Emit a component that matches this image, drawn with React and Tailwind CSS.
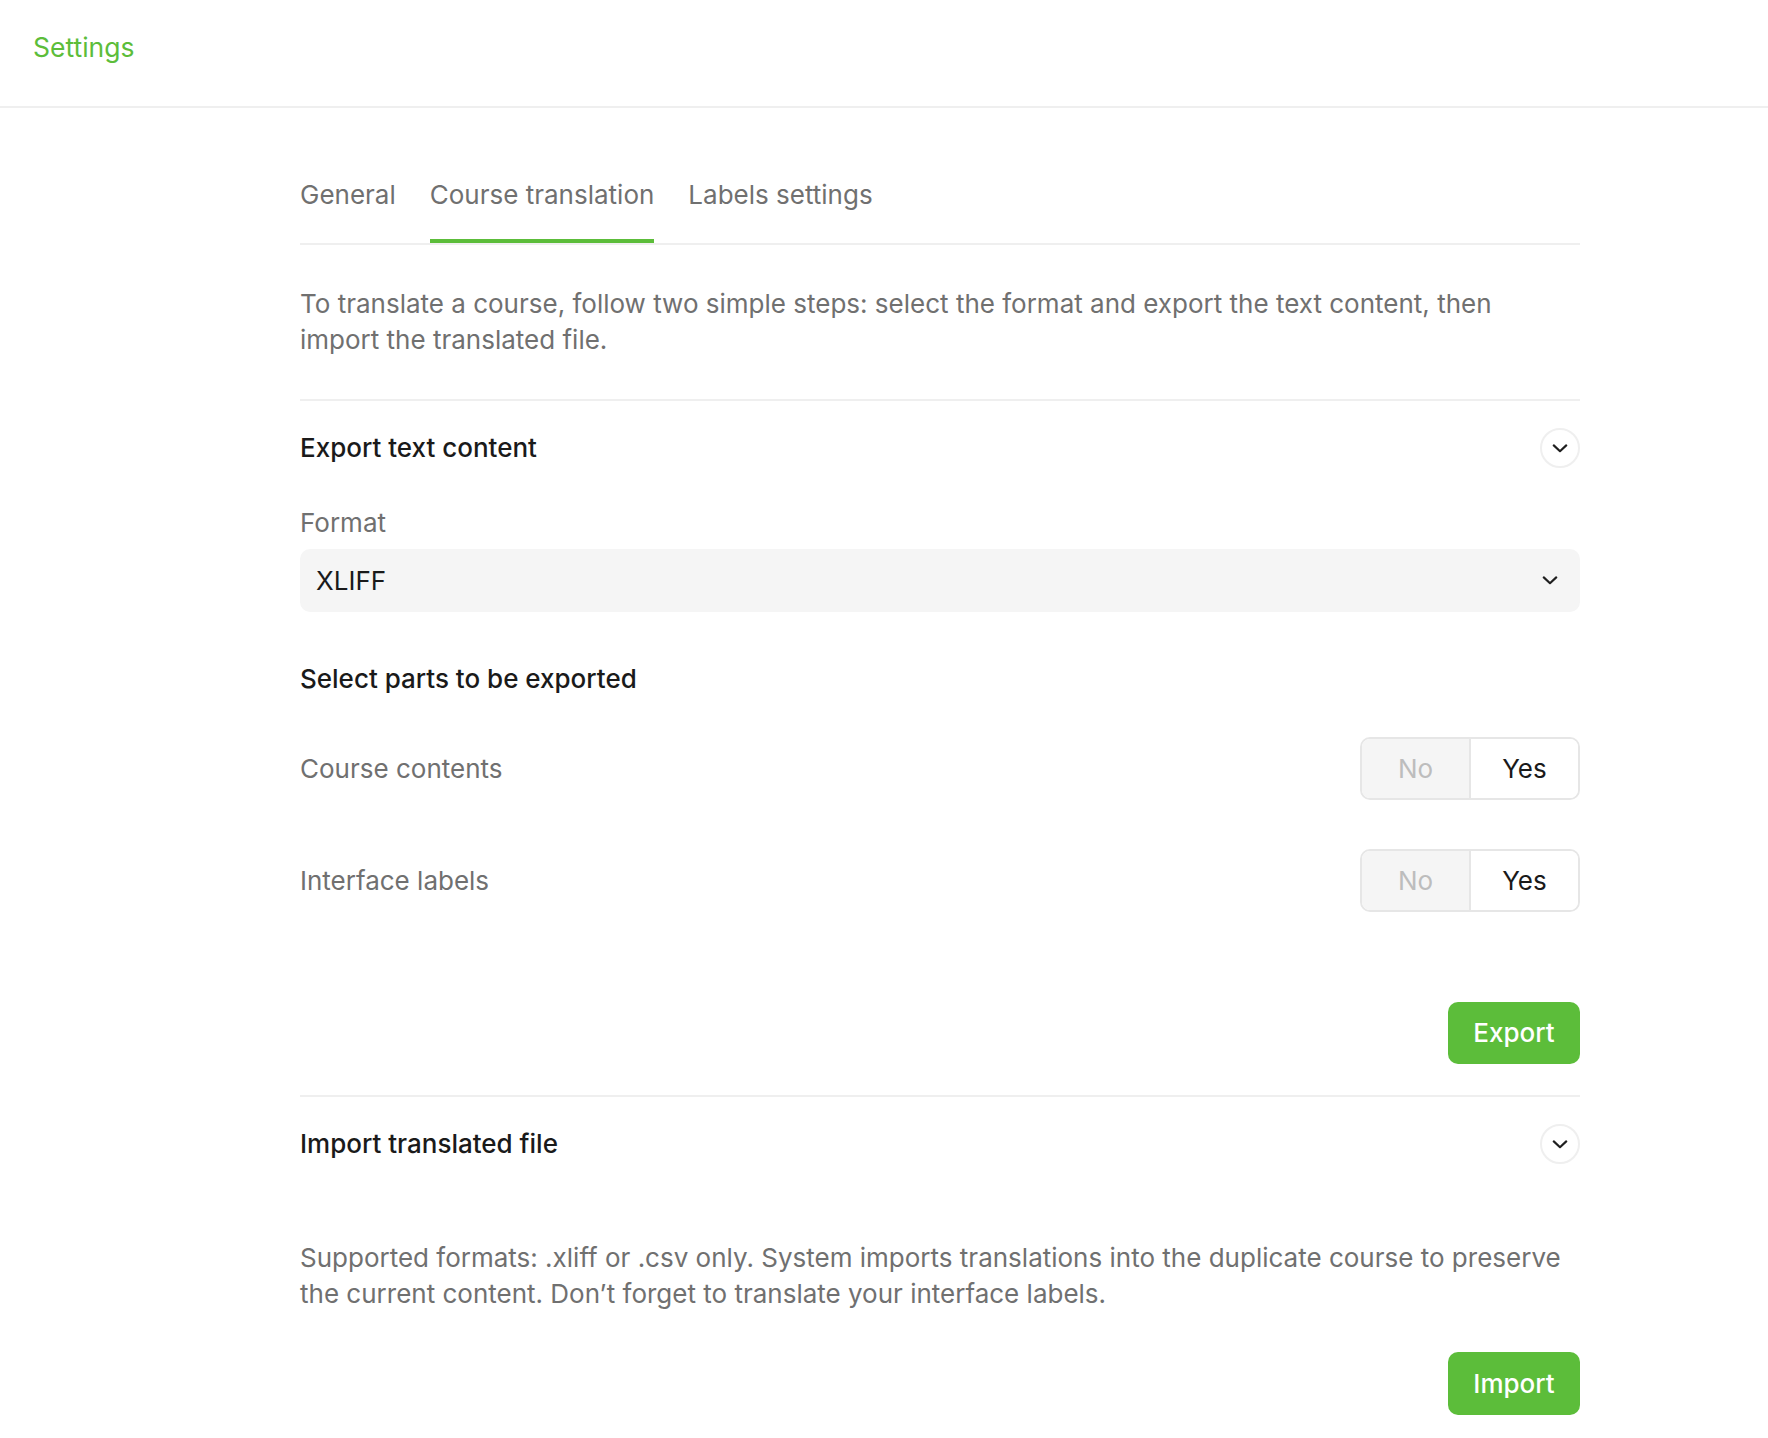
import React from "react";

const Chevron = ({ className = "" }) => (
  <svg width="18" height="10" viewBox="0 0 18 10" className={className} fill="none">
    <polyline points="2,1.5 9,8 16,1.5" stroke="#1f1f1f" strokeWidth="2.4" strokeLinecap="round" strokeLinejoin="round" />
  </svg>
);

const CircleToggle = () => (
  <button className="w-[40px] h-[40px] rounded-full border-2 border-[#efefef] flex items-center justify-center bg-white">
    <Chevron className="w-[16px] h-[9px]" />
  </button>
);

const YesNo = () => (
  <div className="flex h-[63px] w-[220px] rounded-[10px] border-2 border-[#e6e6e6] overflow-hidden">
    <div className="flex-1 bg-[#f5f5f5] flex items-center justify-center text-[#bdbdbd] border-r-2 border-[#e6e6e6]">No</div>
    <div className="flex-1 bg-white flex items-center justify-center text-[#1a1a1a]">Yes</div>
  </div>
);

export default function App() {
  return (
    <div className="min-h-[1438px] bg-white text-[26px] leading-[36px]" style={{ fontFamily: "Inter, 'Noto Sans', sans-serif" }}>
      <header className="h-[108px] border-b-2 border-[#efefef] px-[33px] pb-[12px] flex items-center">
        <span className="text-[#5cbd3a] text-[26.5px]">Settings</span>
      </header>
      <main className="ml-[300px] w-[1280px]">
        <nav className="mt-[69px] flex gap-[34px] border-b-2 border-[#efefef] text-[#707070]">
          <div className="pb-[26px] border-b-4 border-transparent">General</div>
          <div className="pb-[26px] border-b-4 border-[#5cbd3a]">Course translation</div>
          <div className="pb-[26px] border-b-4 border-transparent">Labels settings</div>
        </nav>
        <div className="py-[41px] border-b-2 border-[#efefef]">
          <p className="max-w-[1266px] text-[#707070]">
            To translate a course, follow two simple steps: select the format and export the text content, then import the translated file.
          </p>
        </div>
        <section className="pt-[27px] pb-[31px] border-b-2 border-[#efefef] flex flex-col">
          <div className="flex items-center justify-between h-[40px]">
            <h2 className="font-medium text-[#1a1a1a]">Export text content</h2>
            <CircleToggle />
          </div>
          <div className="mt-[37px] text-[#707070]">Format</div>
          <div className="mt-[8px] h-[63px] rounded-[10px] bg-[#f5f5f5] flex items-center justify-between pl-[16px] pr-[22px] text-[#1a1a1a]">
            <span>XLIFF</span>
            <Chevron className="w-[16px] h-[9px]" />
          </div>
          <h3 className="mt-[49px] font-medium text-[#1a1a1a]">Select parts to be exported</h3>
          <div className="mt-[40px] flex items-center justify-between">
            <span className="text-[#707070]">Course contents</span>
            <YesNo />
          </div>
          <div className="mt-[49px] flex items-center justify-between">
            <span className="text-[#707070]">Interface labels</span>
            <YesNo />
          </div>
          <div className="mt-[90px] flex justify-end">
            <button className="h-[62px] w-[132px] rounded-[10px] bg-[#5cbd3a] text-white font-medium">Export</button>
          </div>
        </section>
        <section className="pt-[27px] flex flex-col">
          <div className="flex items-center justify-between h-[40px]">
            <h2 className="font-medium text-[#1a1a1a]">Import translated file</h2>
            <CircleToggle />
          </div>
          <p className="mt-[76px] text-[#707070]">
            Supported formats: .xliff or .csv only. System imports translations into the duplicate course to preserve the current content. Don’t forget to translate your interface labels.
          </p>
          <div className="mt-[40px] flex justify-end">
            <button className="h-[63px] w-[132px] rounded-[10px] bg-[#5cbd3a] text-white font-medium">Import</button>
          </div>
        </section>
      </main>
    </div>
  );
}
